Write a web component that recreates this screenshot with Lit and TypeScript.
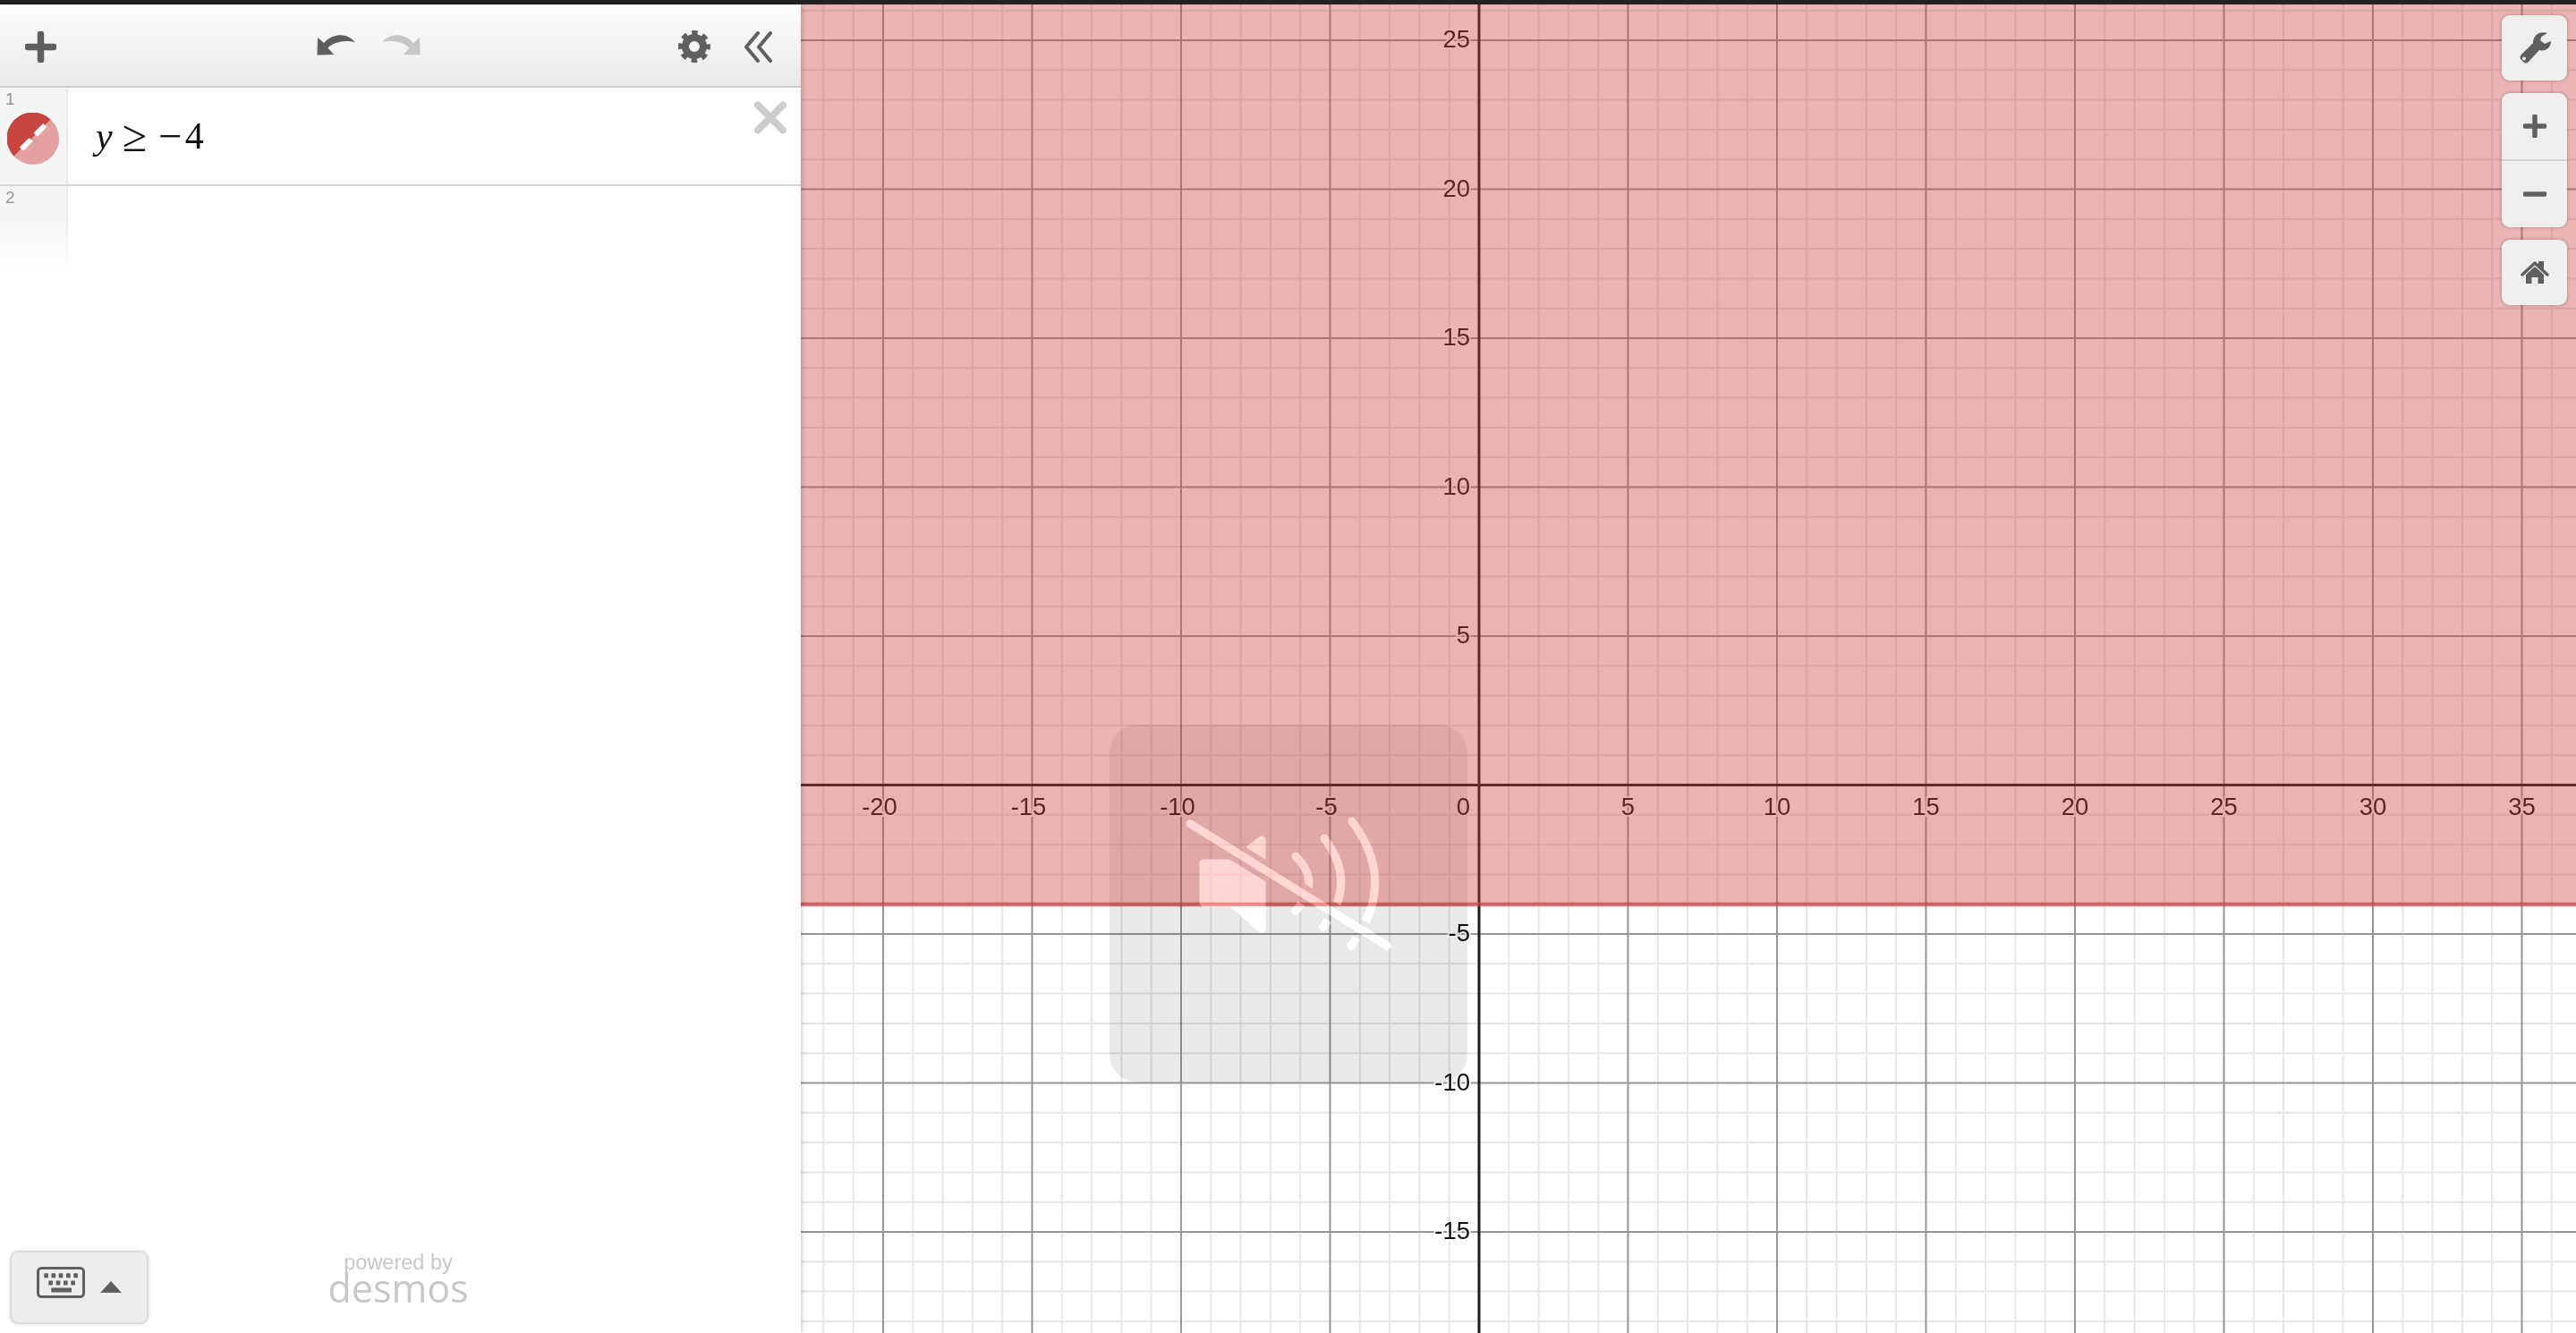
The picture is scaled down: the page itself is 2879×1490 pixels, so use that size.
import { LitElement, html, svg, css } from 'lit';
import { customElement } from 'lit/decorators.js';

// graph geometry, all in px inside the graph pane
const W = 1984;
const H = 1485;
const OX = 758;
const OY = 872.5;
const UNIT = 33.3;

const range = (from: number, to: number) => {
  const out: number[] = [];
  for (let i = from; i <= to; i++) out.push(i);
  return out;
};

@customElement('app-root')
export class AppRoot extends LitElement {
  static styles = css`
    :host {
      display: block;
      width: 2879px;
      height: 1490px;
      overflow: hidden;
      background: #fff;
      font-family: 'Liberation Sans', Arial, sans-serif;
    }
    .topbar { height: 5px; background: #222; }
    .main { display: flex; height: 1485px; }

    .panel {
      width: 895px;
      flex: none;
      display: flex;
      flex-direction: column;
      background: #fff;
      position: relative;
      z-index: 1;
      box-shadow: 0 0 6px rgba(0, 0, 0, 0.3);
    }
    .header {
      height: 88px;
      flex: none;
      display: grid;
      grid-template-columns: 28px 35px 291px 43px 30px 43px 288px 36px 38px 31px;
      align-items: center;
      padding-top: 3px;
      background: linear-gradient(#fdfdfd, #e9e9e9);
      border-bottom: 2px solid #ccc;
    }
    .header svg { display: block; }
    .header .plus { grid-column: 2; }
    .header .undo { grid-column: 4; margin-top: -4px; }
    .header .redo { grid-column: 6; margin-top: -4px; transform: scaleX(-1); }
    .header .gear { grid-column: 8; }
    .header .back { grid-column: 10; }

    .list { flex: 1; display: flex; flex-direction: column; }
    .row { display: flex; position: relative; }
    .row-1 { height: 108px; border-bottom: 2px solid #d6d6d6; }
    .row-2 { height: 100px; }
    .gutter {
      width: 76px;
      flex: none;
      box-sizing: border-box;
      background: #f5f5f5;
      border-right: 2px solid #e9e9e9;
      position: relative;
      font-size: 19px;
      line-height: 22px;
      color: #999;
      padding: 2px 0 0 6px;
    }
    .row-2 .gutter {
      background: linear-gradient(#f5f5f5 30%, #fff);
      border-right: 2px solid transparent;
      border-image: linear-gradient(#e9e9e9 30%, #fff) 1;
    }
    .swatch { position: absolute; left: 8px; top: 28px; display: block; }
    .math {
      display: flex;
      align-items: baseline;
      padding: 28px 0 0 31px;
      font-family: 'Liberation Serif', 'Times New Roman', serif;
      font-size: 42px;
      line-height: 46px;
      color: #111;
    }
    .math i { margin-right: 11px; }
    .math .op { margin-right: 13px; font-size: 50px; line-height: 46px; transform: translateY(3px); }
    .math .minus { margin-right: 3px; font-size: 47px; line-height: 46px; transform: translateY(2px); }
    .close { position: absolute; left: 843px; top: 15px; display: block; }

    .footer {
      flex: none;
      display: flex;
      align-items: flex-start;
      padding: 0 0 10px 11px;
    }
    .kbd {
      width: 155px;
      height: 82px;
      box-sizing: border-box;
      display: flex;
      align-items: flex-start;
      gap: 17px;
      padding: 16px 0 0 28px;
      background: #ededed;
      border: 2px solid #dcdcdc;
      border-radius: 9px;
      box-shadow: 0 0 5px rgba(0, 0, 0, 0.12);
    }
    .kbd .tri { margin-top: 16px; }
    .powered {
      margin: 1px 0 0 201px;
      width: 156px;
      display: flex;
      flex-direction: column;
      align-items: center;
      color: #c8c8c8;
    }
    .powered .by { font-size: 23.5px; line-height: 24px; }
    .powered .name {
      font-family: 'Open Sans', sans-serif;
      font-size: 43px;
      line-height: 34px;
    }

    .graph { flex: 1; position: relative; overflow: hidden; }
    .graph > svg { display: block; }
    .glabel {
      font-family: 'Liberation Sans', Arial, sans-serif;
      font-size: 27.5px;
      fill: #111;
      stroke: rgba(255, 255, 255, 0.85);
      stroke-width: 4px;
      paint-order: stroke;
    }

    .tools {
      position: absolute;
      right: 10px;
      top: 12px;
      display: flex;
      flex-direction: column;
      gap: 14px;
    }
    .btn {
      width: 73px;
      background: #eee;
      border-radius: 9px;
      box-shadow: 0 0 3px 1px rgba(90, 60, 60, 0.25);
      display: flex;
      flex-direction: column;
    }
    .cell { height: 73px; display: flex; align-items: center; justify-content: center; box-sizing: border-box; }
    .cell + .cell { border-top: 2px solid #d4d4d4; height: 76px; }
    .btn.zoom .cell:first-child { height: 74px; }

    /* the shaded half ends right at y = -4, halfway down the box */
    .hud {
      position: absolute;
      left: 345px;
      top: 805px;
      width: 400px;
      height: 400px;
      border-radius: 32px;
      background: linear-gradient(rgba(100, 20, 20, 0.07) 50%, rgba(0, 0, 0, 0.086) 50%);
    }
    .hud svg { display: block; mix-blend-mode: plus-lighter; }
  `;

  renderGrid() {
    const minorX = range(-22, 36).filter((i) => i % 5 !== 0);
    const minorY = range(-18, 26).filter((i) => i % 5 !== 0);
    const majorX = range(-4, 7).map((i) => i * 5).filter((i) => i !== 0);
    const majorY = range(-3, 5).map((i) => i * 5).filter((i) => i !== 0);
    const px = (v: number) => OX + v * UNIT;
    const py = (v: number) => OY - v * UNIT;
    return svg`
      <g stroke="#e6e6e6" stroke-width="2">
        ${minorX.map((v) => svg`<line x1=${px(v)} x2=${px(v)} y1="0" y2=${H}></line>`)}
        ${minorY.map((v) => svg`<line y1=${py(v)} y2=${py(v)} x1="0" x2=${W}></line>`)}
      </g>
      <g stroke="#969696" stroke-width="2">
        ${majorX.map((v) => svg`<line x1=${px(v)} x2=${px(v)} y1="0" y2=${H}></line>`)}
        ${majorY.map((v) => svg`<line y1=${py(v)} y2=${py(v)} x1="0" x2=${W}></line>`)}
      </g>
      <g stroke="#1c1c1c" stroke-width="3">
        <line x1=${OX} x2=${OX} y1="0" y2=${H}></line>
        <line y1=${OY} y2=${OY} x1="0" x2=${W}></line>
      </g>
      ${majorX.map((v) => svg`<text class="glabel" x=${px(v) - (v < 0 ? 4 : 0)} y=${OY + 33} text-anchor="middle">${v}</text>`)}
      <text class="glabel" x=${OX - 10} y=${OY + 33} text-anchor="end">0</text>
      ${majorY.map((v) => svg`<text class="glabel" x=${OX - 10} y=${py(v) + 8} text-anchor="end">${v}</text>`)}
      <rect x="0" y="0" width=${W} height=${py(-4)} fill="rgba(199,68,64,0.4)"></rect>
      <rect x="0" y=${py(-4) - 2} width=${W} height="4.5" fill="rgba(199,68,64,0.75)"></rect>
    `;
  }

  renderMuteIcon() {
    const slash = 'M90 110.7 L310 247';
    return html`
      <svg width="400" height="400" viewBox="0 0 400 400">
        <defs>
          <mask id="cut" maskUnits="userSpaceOnUse" x="0" y="0" width="400" height="400">
            <rect width="400" height="400" fill="#fff"></rect>
            <path d=${slash} stroke="#000" stroke-width="21"></path>
          </mask>
        </defs>
        <g fill="none" stroke="#2e2e2e" stroke-width="9" stroke-linecap="round" mask="url(#cut)">
          <path d="M105 155 H136 L170 129 V228 L137 199 H105 V155 Z" fill="#2e2e2e" stroke-linejoin="round"></path>
          <path d="M208 147 Q238 177 208 208"></path>
          <path d="M240 127 Q278 177 239 226"></path>
          <path d="M271 108 Q323 177 270 247"></path>
        </g>
        <path d=${slash} stroke="#2e2e2e" stroke-width="9" stroke-linecap="round"></path>
      </svg>
    `;
  }

  render() {
    return html`
      <div class="topbar"></div>
      <div class="main">
        <div class="panel">
          <div class="header">
            <svg class="plus" width="35" height="35" viewBox="0 0 35 35">
              <path d="M17.5 3 V32 M3 17.5 H32" stroke="#5f5f5f" stroke-width="7.5" stroke-linecap="round"></path>
            </svg>
            <svg class="undo" width="43" height="25" viewBox="0 0 43 25">
              <path d="M1 4 L0.5 23.5 L19 23 L12.5 15.5 C19 9 32 6 43 9.5 C36 0 20 -3 8 10 Z" fill="#5f5f5f"></path>
            </svg>
            <svg class="redo" width="43" height="25" viewBox="0 0 43 25">
              <path d="M1 4 L0.5 23.5 L19 23 L12.5 15.5 C19 9 32 6 43 9.5 C36 0 20 -3 8 10 Z" fill="#c6c6c6"></path>
            </svg>
            <svg class="gear" width="36" height="36" viewBox="0 0 36 36">
              <g fill="none" stroke="#5f5f5f">
                <circle cx="18" cy="18" r="10" stroke-width="8"></circle>
                <circle cx="18" cy="18" r="15.5" stroke-width="5" stroke-dasharray="6.5 5.67" stroke-dashoffset="3.25"></circle>
              </g>
            </svg>
            <svg class="back" width="31" height="35" viewBox="0 0 31 35">
              <path d="M15 2 L2 17.5 L15 33 M29 2 L16 17.5 L29 33" fill="none" stroke="#5f5f5f" stroke-width="4" stroke-linecap="round" stroke-linejoin="round"></path>
            </svg>
          </div>

          <div class="list">
            <div class="row row-1">
              <div class="gutter">
                1
                <svg class="swatch" width="58" height="58" viewBox="0 0 58 58">
                  <circle cx="29" cy="29" r="29" fill="#e3a2a0"></circle>
                  <path d="M48.5 7.5 A29 29 0 0 0 7.5 48.5 Z" fill="#c74440"></path>
                  <path d="M16 40.6 L26.6 30 M31.7 24.6 L42.3 14" stroke="#fff" stroke-width="6"></path>
                </svg>
              </div>
              <div class="math"><i>y</i><span class="op">≥</span><span class="minus">−</span><span>4</span></div>
              <svg class="close" width="36" height="37" viewBox="0 0 36 37">
                <path d="M4 4.5 L32 32.5 M32 4.5 L4 32.5" stroke="#cdcdcd" stroke-width="8" stroke-linecap="round"></path>
              </svg>
            </div>
            <div class="row row-2"><div class="gutter">2</div></div>
          </div>

          <div class="footer">
            <div class="kbd">
              <svg width="54" height="35" viewBox="0 0 54 35">
                <rect x="1.5" y="1.5" width="51" height="32" rx="4" fill="none" stroke="#5f5f5f" stroke-width="3"></rect>
                <g fill="#5f5f5f">
                  ${[8.3, 16.5, 24.7, 33, 41.3].map((x) => svg`<rect x=${x} y="7.3" width="4.6" height="5"></rect>`)}
                  ${[13.3, 21.7, 30, 38.3].map((x) => svg`<rect x=${x} y="15.5" width="4.6" height="5"></rect>`)}
                  <rect x="16.3" y="23.5" width="22.7" height="5"></rect>
                </g>
              </svg>
              <svg class="tri" width="24" height="13" viewBox="0 0 24 13">
                <path d="M12 0 L24 13 H0 Z" fill="#5f5f5f"></path>
              </svg>
            </div>
            <div class="powered">
              <span class="by">powered by</span>
              <span class="name">desmos</span>
            </div>
          </div>
        </div>

        <div class="graph">
          <svg width=${W} height=${H} viewBox="0 0 ${W} ${H}">${this.renderGrid()}</svg>

          <div class="hud">${this.renderMuteIcon()}</div>

          <div class="tools">
            <div class="btn">
              <div class="cell">
                <svg width="73" height="72" viewBox="0 0 73 72">
                  <path d="M51 19 C43 16 35 21 35 30 L22 43 C20 45 20 47 22 49 L24 51 C26 53 28 53 30 51 L42 38 C49 40 55 35 55 28 L48 31 L43 27 L44.5 23 Z" fill="#5f5f5f"></path>
                  <circle cx="25" cy="47.5" r="2" fill="#eee"></circle>
                </svg>
              </div>
            </div>
            <div class="btn zoom">
              <div class="cell">
                <svg width="26" height="26" viewBox="0 0 26 26">
                  <path d="M13 2 V24 M2 13 H24" stroke="#5f5f5f" stroke-width="5.5" stroke-linecap="round"></path>
                </svg>
              </div>
              <div class="cell">
                <svg width="26" height="26" viewBox="0 0 26 26">
                  <path d="M2 13 H24" stroke="#5f5f5f" stroke-width="5.5" stroke-linecap="round"></path>
                </svg>
              </div>
            </div>
            <div class="btn">
              <div class="cell">
                <svg width="73" height="72" viewBox="0 0 73 72">
                  <path d="M41 27 V23 H47 V33 Z" fill="#5f5f5f"></path>
                  <path d="M23 38 L37 25 L51 38" fill="none" stroke="#5f5f5f" stroke-width="3.5" stroke-linecap="round" stroke-linejoin="round"></path>
                  <path d="M27 38 L37 29 L47 38 V48 H40.5 V41 H33.5 V48 H27 Z" fill="#5f5f5f"></path>
                </svg>
              </div>
            </div>
          </div>
        </div>
      </div>
    `;
  }
}
